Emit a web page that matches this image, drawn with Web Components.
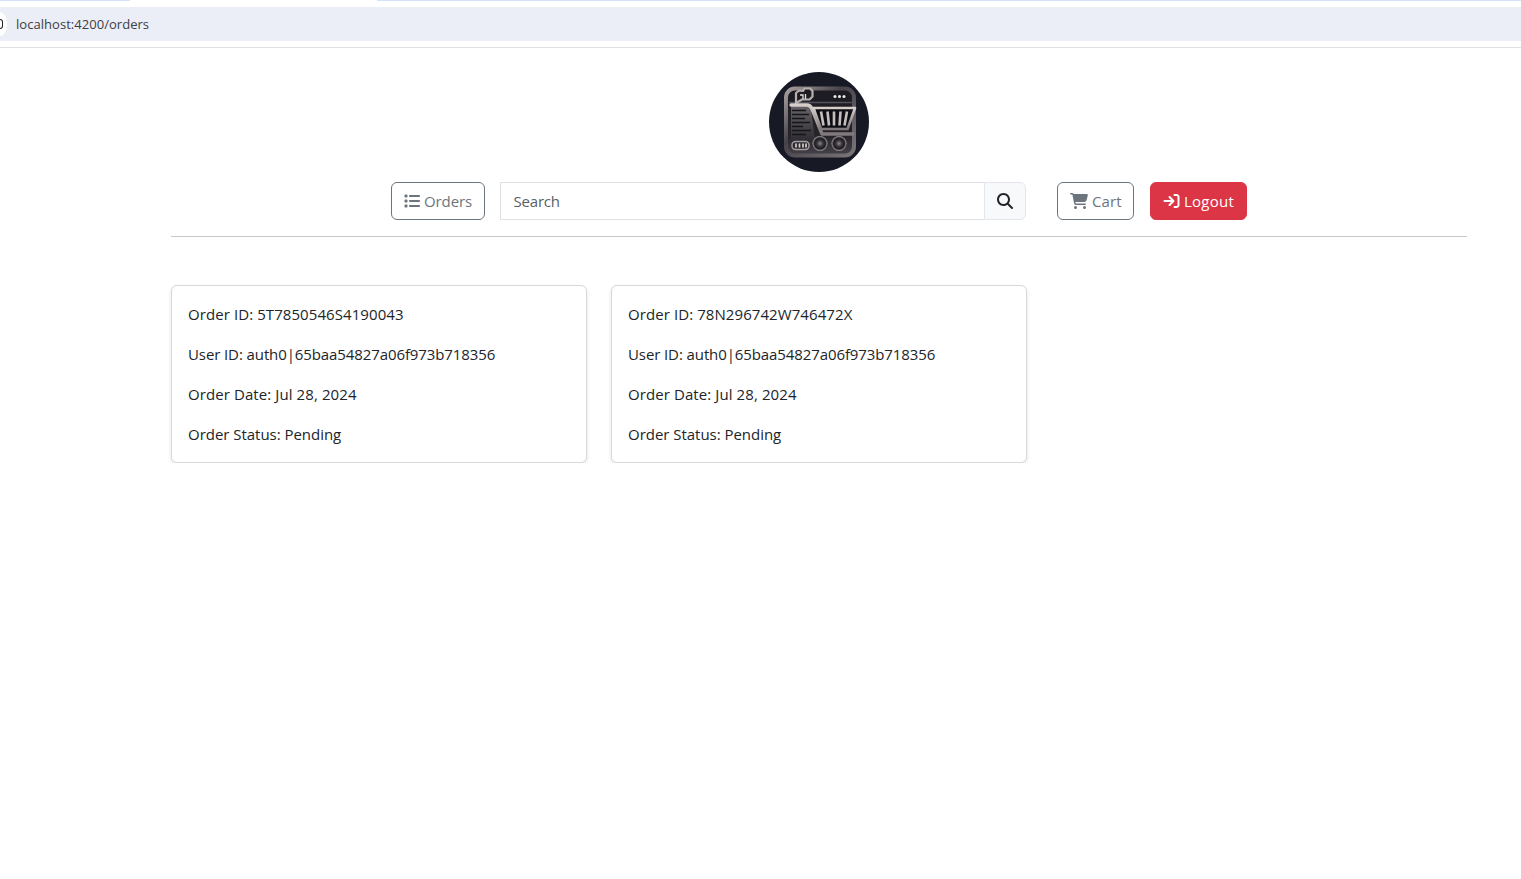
<!DOCTYPE html>
<html>
<head>
<meta charset="utf-8">
<title>Orders</title>
<style>
  html, body { margin: 0; padding: 0; background: #fff; }
  body { font-family: "Open Sans", "Noto Sans", sans-serif; color: #212529; }
</style>
</head>
<body>
<browser-bar url="localhost:4200/orders"></browser-bar>
<app-page>
  <site-header></site-header>
  <order-list>
    <order-card order-id="5T7850546S4190043" user-id="auth0|65baa54827a06f973b718356" date="Jul 28, 2024" status="Pending"></order-card>
    <order-card order-id="78N296742W746472X" user-id="auth0|65baa54827a06f973b718356" date="Jul 28, 2024" status="Pending"></order-card>
  </order-list>
</app-page>

<script>
const FONT = '"Open Sans", "Noto Sans", sans-serif';

class BrowserBar extends HTMLElement {
  constructor() {
    super();
    this.attachShadow({ mode: "open" });
    this.shadowRoot.innerHTML = `
      <style>
        :host { display: block; height: 48px; box-sizing: border-box; border-bottom: 1px solid #e1e1e1; overflow: hidden; }
        .tabs { display: flex; height: 1px; }
        .tabs i { background: #d3e3fd; }
        .tabs i:nth-child(1) { width: 130px; }
        .tabs i:nth-child(2) { width: 247px; background: #fff; }
        .tabs i:nth-child(3) { flex: 1; }
        .address {
          margin-top: 6px; height: 34px; background: #ebeef7;
          display: flex; align-items: center; gap: 9px;
          font: 13px/1 ${FONT}; color: #3c4043; letter-spacing: 0.04px;
        }
        .dot { width: 14px; height: 24px; margin-left: -7px; flex: none; border-radius: 50%; background: #fff; display: flex; align-items: center; justify-content: flex-end; }
        .dot::after { content: ""; width: 2px; height: 8px; margin-right: 4px; border: 1.5px solid #222; border-left: 0; border-radius: 0 4px 4px 0; }
      </style>
      <div class="tabs"><i></i><i></i><i></i></div>
      <div class="address"><span class="dot"></span><span>${this.getAttribute("url")}</span></div>
    `;
  }
}
customElements.define("browser-bar", BrowserBar);

class AppPage extends HTMLElement {
  constructor() {
    super();
    this.attachShadow({ mode: "open" });
    this.shadowRoot.innerHTML = `
      <style>
        :host { display: block; width: 1296px; margin-left: 171px; padding-top: 24px; }
      </style>
      <slot></slot>
    `;
  }
}
customElements.define("app-page", AppPage);

class SiteHeader extends HTMLElement {
  constructor() {
    super();
    this.attachShadow({ mode: "open" });
    this.shadowRoot.innerHTML = `
      <style>
        :host { display: block; font: 15px/1.5 ${FONT}; padding-bottom: 16px; border-bottom: 1px solid #c9c9c9; }
        .logo { display: block; width: 100px; height: 100px; margin: 0 auto 10px; }
        nav { display: flex; justify-content: center; height: 38px; }
        .btn {
          box-sizing: border-box; height: 38px; display: flex; align-items: center; gap: 4px;
          border: 1px solid #6c757d; border-radius: 6px; color: #6c757d; background: #fff;
          font: inherit; padding: 0 12px; letter-spacing: -0.1px;
        }
        .btn svg { display: block; fill: currentColor; flex: none; }
        .orders { width: 94px; margin-right: 15px; }
        .search { width: 484px; box-sizing: border-box; border: 1px solid #dee2e6; border-right: 0; padding: 0 12.5px; display: flex; align-items: center; color: #595f65; letter-spacing: -0.2px; }
        .go { width: 42px; box-sizing: border-box; height: 38px; background: #f8f9fa; border: 1px solid #e3e6ea; border-radius: 0 6px 6px 0; display: flex; align-items: center; justify-content: center; margin-right: 31px; }
        .cart { width: 77px; margin-right: 16px; letter-spacing: 0.1px; }
        .logout { width: 97px; background: #dc3545; border-color: #dc3545; color: #fff; letter-spacing: 0.25px; }
      </style>
      <svg class="logo" viewBox="0 0 100 100">
        <defs>
          <linearGradient id="frame" x1="0" y1="0" x2="1" y2="1">
            <stop offset="0" stop-color="#a89f9e"/>
            <stop offset=".4" stop-color="#47434a"/>
            <stop offset="1" stop-color="#7b7477"/>
          </linearGradient>
          <linearGradient id="panel" x1="0" y1="0" x2="0" y2="1">
            <stop offset="0" stop-color="#1c1b21"/>
            <stop offset=".7" stop-color="#26252b"/>
            <stop offset="1" stop-color="#46434a"/>
          </linearGradient>
          <linearGradient id="sheet" x1="0" y1="0" x2="0" y2="1">
            <stop offset="0" stop-color="#6a656a"/>
            <stop offset="1" stop-color="#2f2d33"/>
          </linearGradient>
          <linearGradient id="steel" x1="0" y1="0" x2="0" y2="1">
            <stop offset="0" stop-color="#d6cecb"/>
            <stop offset="1" stop-color="#7f787b"/>
          </linearGradient>
          <radialGradient id="hub">
            <stop offset="0" stop-color="#8f888a"/>
            <stop offset=".4" stop-color="#3a373c"/>
            <stop offset=".72" stop-color="#1c1b20"/>
            <stop offset="1" stop-color="#a69e9f"/>
          </radialGradient>
          <filter id="soft"><feGaussianBlur stdDeviation="0.3"/></filter>
        </defs>
        <circle cx="50" cy="50" r="50" fill="#171a25"/>
        <g filter="url(#soft)">
          <rect x="17" y="16.500" width="68" height="67" rx="9" fill="url(#panel)" stroke="url(#frame)" stroke-width="4"/>
          <path d="M20 30.500H84" stroke="#55515a" stroke-width="1.500"/>
          <path d="M27 31v-10l3-2.500 4 .5 1.500-2.500h5.500l2.500 2.500v5.500l-3 3H33z" fill="#1f1e23" stroke="#b7afae" stroke-width="2.200" stroke-linejoin="round"/>
          <path d="M31 23h3v4M36.500 22v5" stroke="#e2dddc" stroke-width="1.300" fill="none"/>
          <circle cx="66" cy="24.500" r="1.500" fill="#eeeaea"/><circle cx="70.500" cy="24.500" r="1.500" fill="#eeeaea"/><circle cx="75" cy="24.500" r="1.500" fill="#eeeaea"/>
          <path d="M22 33h17l3 4 4 31H22z" fill="url(#sheet)"/>
          <path d="M23 38.500h14M23 42.500h17M23 46.500h13M23 50.500h18M23 54.500h11M23 58.500h19M23 62.500h14" stroke="#121216" stroke-width="1.700"/>
          <path d="M22 33H38c2.500 0 4 1.500 5 4l10 25h31" fill="none" stroke="url(#steel)" stroke-width="3.400" stroke-linecap="round" stroke-linejoin="round"/>
          <path d="M44.500 36H86L78.500 57H52z" fill="#101014" stroke="url(#steel)" stroke-width="2.600" stroke-linejoin="round"/>
          <path d="M52 39.500l2.500 14M58.500 39.500l1.500 14M65 39.500v14M71.500 39.500l-1 14M78 39.500l-2.500 14" stroke="#c6bebd" stroke-width="2.600"/>
          <rect x="23" y="69.500" width="17" height="8" rx="3.500" fill="#2c2a2f" stroke="#a69e9f" stroke-width="1.400"/>
          <path d="M27 71.500v4M30.500 71.500v4M34 71.500v4M37 71.500v4" stroke="#d3cdcd" stroke-width="1.700"/>
          <circle cx="51" cy="71.500" r="7.500" fill="url(#hub)"/>
          <circle cx="70" cy="71.500" r="7.500" fill="url(#hub)"/>
        </g>
      </svg>
      <nav>
        <div class="btn orders">
          <svg width="16" height="16" viewBox="0 0 512 512"><path d="M40 48C26.700 48 16 58.700 16 72v48c0 13.300 10.700 24 24 24h48c13.300 0 24-10.700 24-24V72c0-13.300-10.700-24-24-24H40zM192 64c-17.700 0-32 14.300-32 32s14.300 32 32 32h288c17.700 0 32-14.300 32-32s-14.300-32-32-32H192zm0 160c-17.700 0-32 14.300-32 32s14.300 32 32 32h288c17.700 0 32-14.300 32-32s-14.300-32-32-32H192zm0 160c-17.700 0-32 14.300-32 32s14.300 32 32 32h288c17.700 0 32-14.300 32-32s-14.300-32-32-32H192zM16 232v48c0 13.300 10.700 24 24 24h48c13.300 0 24-10.700 24-24v-48c0-13.300-10.700-24-24-24H40c-13.300 0-24 10.700-24 24zm24 136c-13.300 0-24 10.700-24 24v48c0 13.300 10.700 24 24 24h48c13.300 0 24-10.700 24-24v-48c0-13.300-10.700-24-24-24H40z"/></svg>
          <span>Orders</span>
        </div>
        <div class="search">Search</div>
        <div class="go">
          <svg width="16" height="16" viewBox="0 0 512 512" fill="#212529"><path d="M416 208c0 45.900-14.900 88.300-40 122.700l126.600 126.700c12.500 12.500 12.500 32.800 0 45.300s-32.800 12.500-45.300 0L330.700 376c-34.400 25.200-76.800 40-122.700 40C93.100 416 0 322.900 0 208S93.100 0 208 0s208 93.100 208 208zM208 352a144 144 0 1 0 0-288 144 144 0 1 0 0 288z"/></svg>
        </div>
        <div class="btn cart">
          <svg width="18" height="16" viewBox="0 0 576 512"><path d="M0 24C0 10.700 10.700 0 24 0h45.500c22 0 41.500 12.800 50.600 32h411c26.300 0 45.500 25 38.600 50.400l-41 152.300c-8.500 31.400-37 53.300-69.500 53.300H170.700l5.400 28.500c2.200 11.300 12.100 19.500 23.600 19.500H488c13.300 0 24 10.700 24 24s-10.700 24-24 24H199.700c-34.600 0-64.300-24.600-70.700-58.500L77.400 54.500c-.7-3.800-4-6.500-7.900-6.500H24C10.700 48 0 37.300 0 24zM128 464a48 48 0 1 1 96 0 48 48 0 1 1-96 0zm336-48a48 48 0 1 1 0 96 48 48 0 1 1 0-96z"/></svg>
          <span>Cart</span>
        </div>
        <div class="btn logout">
          <svg width="17" height="16" viewBox="0 0 512 512"><path d="M352 96h64c17.700 0 32 14.300 32 32v256c0 17.700-14.300 32-32 32h-64c-17.700 0-32 14.300-32 32s14.300 32 32 32h64c53 0 96-43 96-96V128c0-53-43-96-96-96h-64c-17.700 0-32 14.300-32 32s14.300 32 32 32zm-9.400 182.600c12.500-12.500 12.500-32.800 0-45.300l-128-128c-12.500-12.500-32.800-12.500-45.300 0s-12.500 32.800 0 45.300l73.400 73.400H32c-17.700 0-32 14.300-32 32s14.300 32 32 32h210.700l-73.400 73.400c-12.500 12.500-12.500 32.800 0 45.300s32.800 12.500 45.300 0l128-128z"/></svg>
          <span>Logout</span>
        </div>
      </nav>
    `;
  }
}
customElements.define("site-header", SiteHeader);

class OrderList extends HTMLElement {
  constructor() {
    super();
    this.attachShadow({ mode: "open" });
    this.shadowRoot.innerHTML = `
      <style>
        :host { display: flex; gap: 24px; padding-top: 48px; }
      </style>
      <slot></slot>
    `;
  }
}
customElements.define("order-list", OrderList);

class OrderCard extends HTMLElement {
  constructor() {
    super();
    this.attachShadow({ mode: "open" });
    this.shadowRoot.innerHTML = `
      <style>
        :host {
          display: block; box-sizing: border-box; width: 416px; height: 178px; padding: 16px;
          border: 1px solid #d8d8d8; border-radius: 6px; background: #fff;
          box-shadow: 0 2px 4px rgba(0, 0, 0, .1);
          font: 15px/24px ${FONT}; color: #212529;
        }
        p { margin: 0 0 16px; }
        p:last-child { margin: 0; }
        .id { letter-spacing: 0.08px; }
        .user { letter-spacing: -0.1px; }
        .date { letter-spacing: 0.09px; }
        .status { letter-spacing: -0.03px; }
      </style>
      <p class="id">Order ID: ${this.getAttribute("order-id")}</p>
      <p class="user">User ID: ${this.getAttribute("user-id")}</p>
      <p class="date">Order Date: ${this.getAttribute("date")}</p>
      <p class="status">Order Status: ${this.getAttribute("status")}</p>
    `;
  }
}
customElements.define("order-card", OrderCard);
</script>
</body>
</html>
